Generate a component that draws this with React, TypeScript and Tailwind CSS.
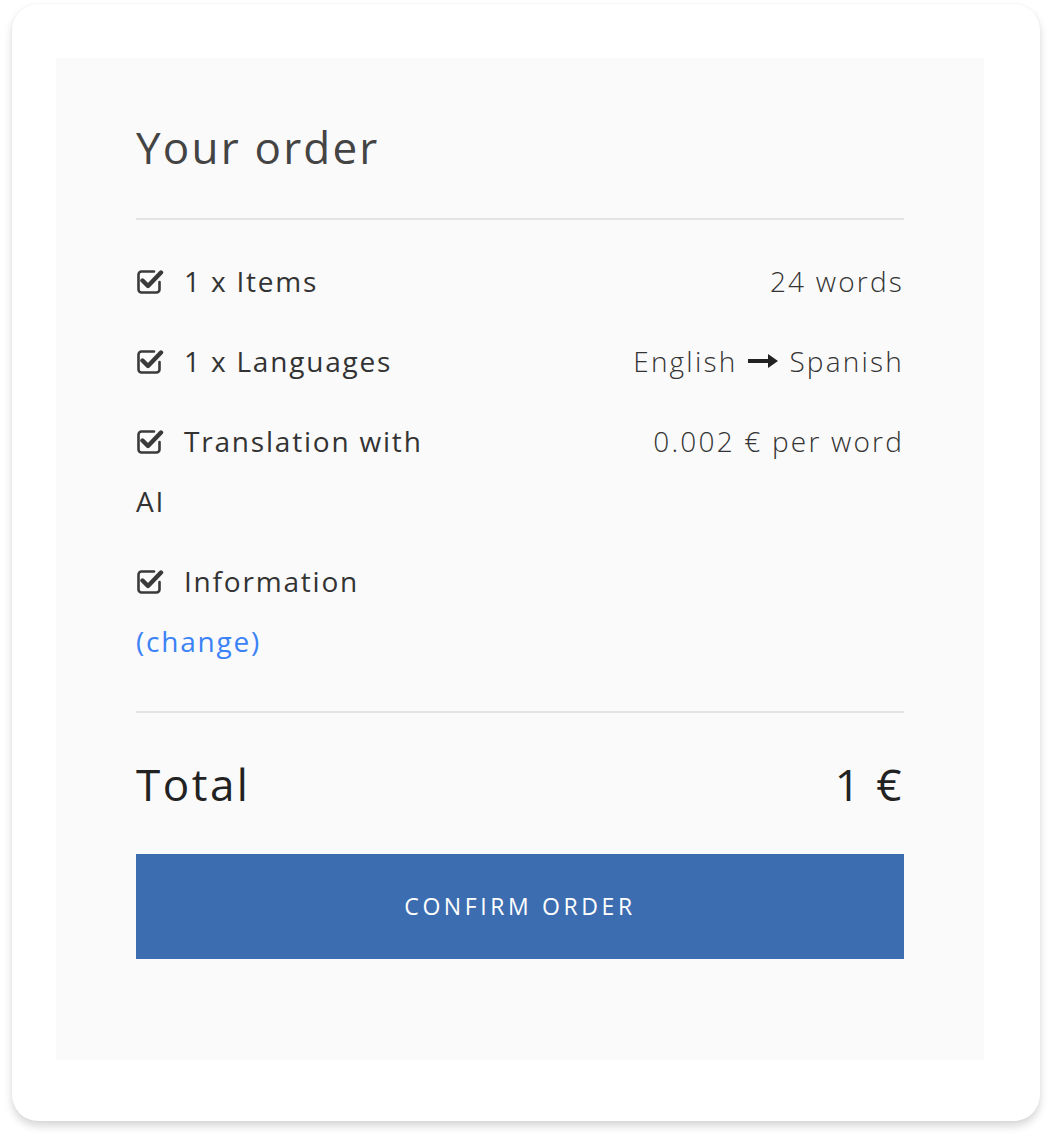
import React from 'react'

function CheckIcon() {
    return (
        <svg width="28" height="28" viewBox="0 0 28 28" className="shrink-0" fill="none">
            <path
                d="M18 4.5 H5.5 a3 3 0 0 0 -3 3 V22.5 a3 3 0 0 0 3 3 H20.5 a3 3 0 0 0 3 -3 V15"
                stroke="#3a3a3a"
                strokeWidth="2.6"
                strokeLinecap="round"
            />
            <path d="M6.5 13.5 L12 19 L25 5.5" stroke="#3a3a3a" strokeWidth="4.4" strokeLinecap="round" strokeLinejoin="round" />
        </svg>
    )
}

function Arrow() {
    return (
        <svg width="32" height="16" viewBox="0 0 32 16" className="mx-[10px] inline-block">
            <rect x="1" y="6" width="22" height="4" fill="#222" />
            <polygon points="21,1 31,8 21,15" fill="#222" />
        </svg>
    )
}

function Row({ label, value }: { label: React.ReactNode; value?: React.ReactNode }) {
    return (
        <div className="flex justify-between items-start text-[28px] leading-[60px] text-[#333]">
            <div className="tracking-[1.8px]">{label}</div>
            {value && <div className="font-light tracking-[2.2px] text-right flex items-center">{value}</div>}
        </div>
    )
}

export default function App() {
    return (
        <div className="min-h-screen bg-white pt-[4px] px-[12px] pb-[20px]" style={{ fontFamily: '"Open Sans", "Liberation Sans", sans-serif' }}>
            <div className="bg-white rounded-[26px] shadow-[0_5px_8px_rgba(0,0,0,0.16),0_0_2px_rgba(0,0,0,0.06)] pt-[54px] pb-[61px] pl-[44px] pr-[56px]">
                <div className="bg-[#fafafa] px-[80px] pt-[59px] pb-[101px]">
                    <h1 className="text-[44px] leading-[60px] text-[#444] tracking-[2.2px]">Your order</h1>
                    <div className="mt-[41px] h-[2px] bg-[#e3e3e3]" />

                    <div className="mt-[31px] flex flex-col gap-[20px]">
                        <Row
                            label={<span className="flex items-center gap-[20px]"><CheckIcon />1 x Items</span>}
                            value="24 words"
                        />
                        <Row
                            label={<span className="flex items-center gap-[20px]"><CheckIcon />1 x Languages</span>}
                            value={<>English<Arrow />Spanish</>}
                        />
                        <Row
                            label={<><span className="flex items-center gap-[20px]"><CheckIcon />Translation with</span><span className="block">AI</span></>}
                            value="0.002 € per word"
                        />
                        <Row
                            label={<><span className="flex items-center gap-[20px]"><CheckIcon />Information</span><a href="#" className="block text-[#3b82f6]">(change)</a></>}
                        />
                    </div>

                    <div className="mt-[40px] h-[2px] bg-[#e3e3e3]" />

                    <div className="mt-[41px] flex justify-between text-[44px] leading-[60px] text-[#222] tracking-[2.5px]">
                        <span>Total</span>
                        <span>1 €</span>
                    </div>

                    <button className="mt-[40px] w-full h-[105px] bg-[#3d6db1] text-white text-[23px] tracking-[3.6px] uppercase">
                        Confirm order
                    </button>
                </div>
            </div>
        </div>
    )
}
